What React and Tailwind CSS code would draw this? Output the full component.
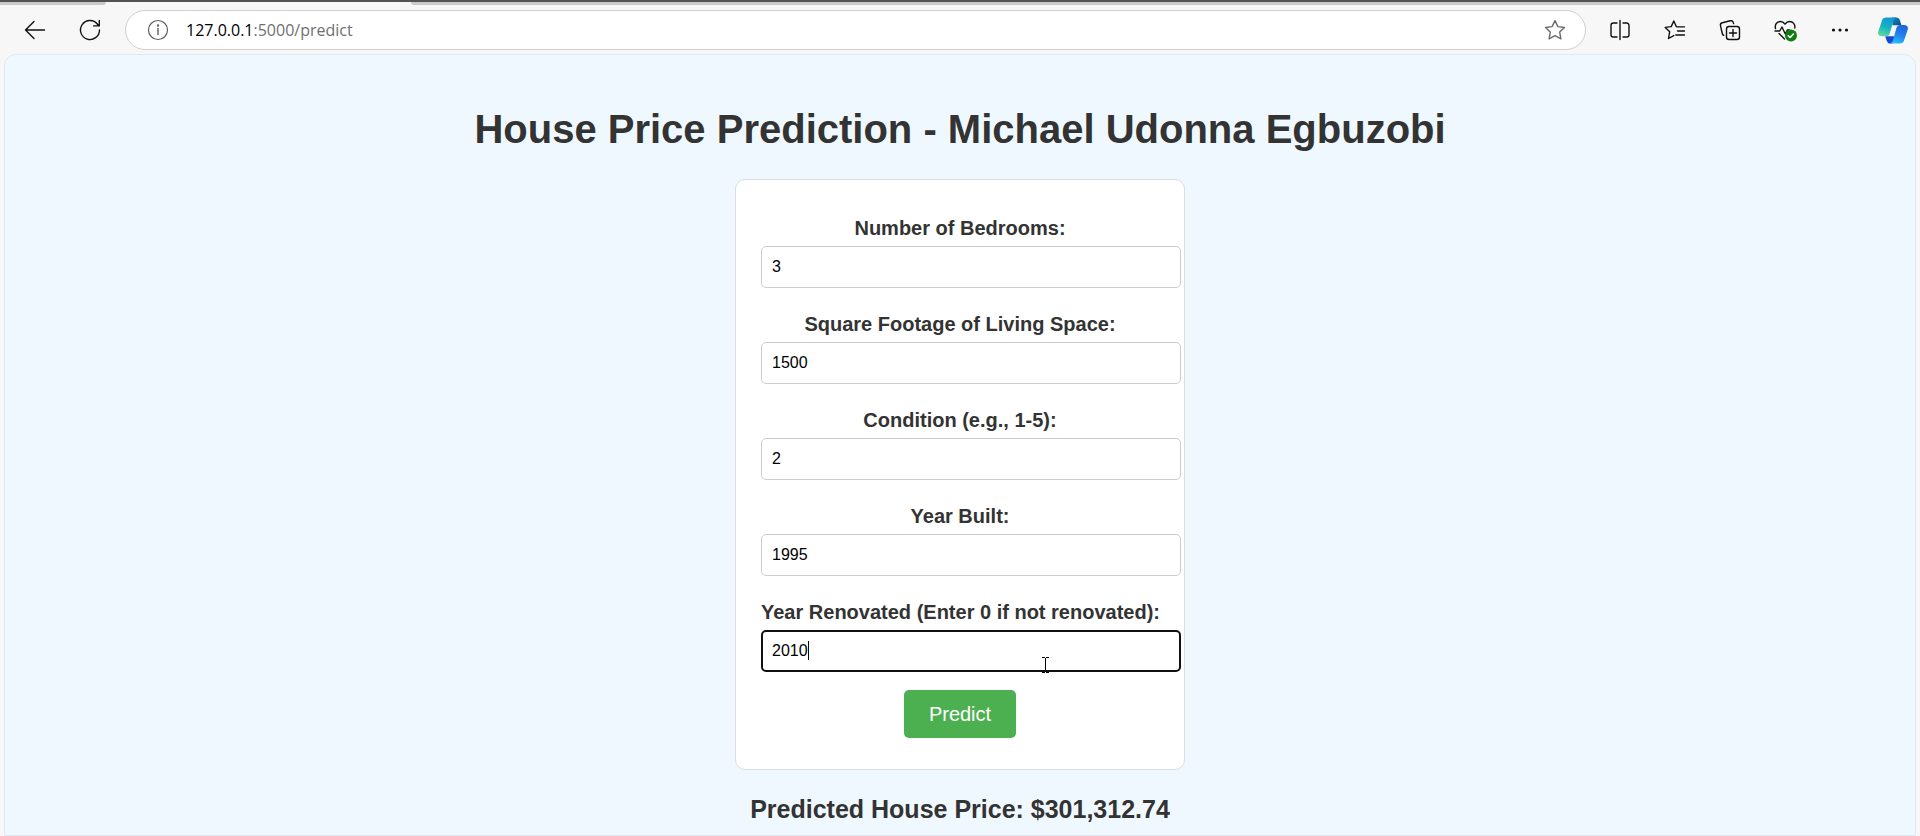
import { useState } from "react";

function Icon({ children, size = 24, className = "" }) {
  return (
    <svg width={size} height={size} viewBox="0 0 24 24" fill="none" stroke="currentColor" strokeWidth="1.4" strokeLinecap="round" strokeLinejoin="round" className={"shrink-0 " + className} aria-hidden="true">
      {children}
    </svg>
  );
}

function ToolButton({ label, children }) {
  return (
    <button type="button" aria-label={label} className="flex h-9 w-9 items-center justify-center text-[#111]">
      {children}
    </button>
  );
}

function CopilotLogo() {
  return (
    <svg width="30" height="27" viewBox="0 0 92 80" className="shrink-0" aria-hidden="true">
      <defs>
        <linearGradient id="cp-left" x1="0.6" y1="0" x2="0.3" y2="1">
          <stop offset="0" stopColor="#1496d8" />
          <stop offset="0.5" stopColor="#12b3c4" />
          <stop offset="1" stopColor="#62d99a" />
        </linearGradient>
        <linearGradient id="cp-right" x1="0.7" y1="0" x2="0.3" y2="1">
          <stop offset="0" stopColor="#1f62dd" />
          <stop offset="0.5" stopColor="#2280ee" />
          <stop offset="1" stopColor="#27c0f5" />
        </linearGradient>
        <linearGradient id="cp-top" x1="0" y1="0" x2="1" y2="1">
          <stop offset="0" stopColor="#1586b8" />
          <stop offset="1" stopColor="#0b4f86" />
        </linearGradient>
      </defs>
      <path d="M44 0h12c6 0 9 3 11 8l5 16H44z" fill="url(#cp-top)" />
      <path d="M22 58H54L44 80H38c-6 0-9-3-11-8z" fill="#1b45d3" />
      <path d="M25 0h32c-6 2-9 7-11 14L36 49c-2 6-6 9-12 9H12C3 58-2 52 1 43L12 10C14 3 18 0 25 0z" fill="url(#cp-left)" />
      <path d="M67 80H36c6-1 9-6 11-13l9-33c2-7 6-11 12-11h12c9 0 14 6 11 15L80 70c-2 7-6 10-13 10z" fill="url(#cp-right)" />
    </svg>
  );
}

function TabStrip() {
  return (
    <div className="flex h-[5px] border-t-2 border-[#545252] bg-[#f7f7f7]">
      <div className="w-[106px] rounded-br-lg bg-[#c9c9c9]" />
      <div className="w-[305px]" />
      <div className="flex-1 rounded-bl-lg bg-[#c9c9c9]" />
    </div>
  );
}

function Toolbar() {
  return (
    <div className="flex items-center pt-[5px] pb-1 pl-[17px] pr-[9px]">
      <div className="mr-[17px] flex gap-[19px]">
        <ToolButton label="Back">
          <Icon>
            <path d="M21.500 12H2.500M11 3.500 2.500 12l8.500 8.500" />
          </Icon>
        </ToolButton>
        <ToolButton label="Refresh">
          <Icon>
            <path d="M21.500 12A9.500 9.500 0 1 1 19.500 6.200L21 7.800M21.300 2.500V7.900H15.600" />
          </Icon>
        </ToolButton>
      </div>
      <div className="flex h-10 flex-1 items-center rounded-full border border-[#cfcfcf] bg-white pl-5 pr-[18px]">
        <Icon className="text-[#5f5f5f]">
          <circle cx="12" cy="12" r="9.500" strokeWidth="1.200" />
          <path d="M12 10.500v6" />
          <circle cx="12" cy="7.500" r=".5" fill="currentColor" />
        </Icon>
        <p className="ml-4 flex-1 font-['Open_Sans',sans-serif] text-[16px] leading-6 text-[#707070]">
          <span className="text-black">127.0.0.1</span>:5000/predict
        </p>
        <button type="button" aria-label="Add to favorites" className="text-[#6a6a6a]">
          <Icon>
            <path d="M12 2.600l2.900 6 6.600.9-4.800 4.600 1.200 6.700-5.900-3.200-5.900 3.200 1.200-6.700L2.500 9.500l6.600-.9z" />
          </Icon>
        </button>
      </div>
      <div className="ml-4 flex items-center">
        <div className="flex items-center gap-[19px]">
          <ToolButton label="Split screen">
            <Icon>
              <path d="M12 2.500v19M9 5H5.300A2.300 2.300 0 0 0 3 7.300v9.400A2.300 2.300 0 0 0 5.300 19H9M15 5h3.700A2.300 2.300 0 0 1 21 7.300v9.400a2.300 2.300 0 0 1-2.300 2.300H15" />
            </Icon>
          </ToolButton>
          <ToolButton label="Favorites">
            <Icon>
              <path d="M13.500 8.500h-.2L10.800 3 8.200 8.600l-6 .8 4.500 4.300L5.500 20.500l5.300-2.900M14 8.900h7.500M14.500 13h7M12.800 17h8.700" />
            </Icon>
          </ToolButton>
          <ToolButton label="Collections">
            <Icon>
              <rect x="8.500" y="8.500" width="13" height="13" rx="2.500" />
              <path d="M15 11.500v7M11.500 15h7M5.800 17.300a2.500 2.500 0 0 1-1.500-1.800L2.500 7.800A2.500 2.500 0 0 1 4.300 4.800l8-2a2.500 2.500 0 0 1 3 1.800l.3 1" />
            </Icon>
          </ToolButton>
          <ToolButton label="Browser essentials">
            <Icon>
              <path d="M2.500 10.500C1.500 6.500 4 3.500 7.300 3.500c2 0 3.500 1 4.700 2.700 1.200-1.700 2.700-2.700 4.700-2.700 3.300 0 5.700 2.800 5.100 6.500M2 13h4.700l2.300-4 3.300 7 2-4h2M6 15.500l5.500 5.500" />
              <circle cx="18" cy="17.500" r="6" fill="#107c10" stroke="none" />
              <path d="M15.300 17.700l1.800 1.800 3.300-3.500" stroke="#fff" strokeWidth="1.600" />
            </Icon>
          </ToolButton>
          <ToolButton label="Settings and more">
            <Icon>
              <g fill="currentColor" stroke="none">
                <circle cx="5.500" cy="12" r="1.600" />
                <circle cx="12" cy="12" r="1.600" />
                <circle cx="18.500" cy="12" r="1.600" />
              </g>
            </Icon>
          </ToolButton>
        </div>
        <div className="ml-[17px]">
          <ToolButton label="Copilot">
            <CopilotLogo />
          </ToolButton>
        </div>
      </div>
    </div>
  );
}

const FIELDS = [
  { id: "bedrooms", label: "Number of Bedrooms:", value: "3" },
  { id: "sqft", label: "Square Footage of Living Space:", value: "1500" },
  { id: "condition", label: "Condition (e.g., 1-5):", value: "2" },
  { id: "built", label: "Year Built:", value: "1995" },
  { id: "renovated", label: "Year Renovated (Enter 0 if not renovated):", value: "2010", active: true },
];

function Field({ id, label, value, active }) {
  const [text, setText] = useState(value);
  return (
    <div className="mb-6 last-of-type:mb-[18px]">
      <label htmlFor={id} className="mb-[5px] block whitespace-nowrap text-center text-[20px] font-bold leading-[25px]">
        {label}
      </label>
      <div className="relative -mr-[22px]">
        <input
          id={id}
          value={text}
          onChange={(e) => setText(e.target.value)}
          className={
            "block h-[42px] w-full rounded-[5px] bg-white text-[16px] text-black outline-none " +
            (active ? "border-2 border-[#101010] px-[9px]" : "border border-[#ccc] px-2.5")
          }
        />
        {active && (
          <>
            <span className="absolute left-[47px] top-[11px] h-[19px] w-px bg-black" />
            <svg width="9" height="16" viewBox="0 0 9 16" className="absolute left-[280px] top-[27px]" fill="none" stroke="#000" aria-hidden="true">
              <path d="M1 .5h3M5 .5h3M4.500 1v14M1 15.500h3M5 15.500h3" />
            </svg>
          </>
        )}
      </div>
    </div>
  );
}

export default function App() {
  return (
    <div className="flex min-h-screen flex-col bg-[#f7f7f7]">
      <TabStrip />
      <Toolbar />
      <main className="mx-1 flex flex-1 flex-col items-center rounded-t-xl border border-[#e2e8f0] bg-[#f0f8ff] font-['Liberation_Sans',Arial,sans-serif] text-[#333]">
        <h1 className="mt-[50px] text-center text-[40px] font-bold leading-[48px]">House Price Prediction - Michael Udonna Egbuzobi</h1>
        <form onSubmit={(e) => e.preventDefault()} className="mt-[26px] w-[450px] rounded-[10px] border border-[#ddd] bg-white px-[25px] pb-[31px] pt-9">
          {FIELDS.map((f) => (
            <Field key={f.id} {...f} />
          ))}
          <button type="submit" className="mx-auto block h-12 w-28 rounded-[5px] bg-[#4caf50] text-[20px] text-white">
            Predict
          </button>
        </form>
        <h2 className="mt-6 text-center text-[25px] font-bold leading-[30px]">Predicted House Price: $301,312.74</h2>
      </main>
    </div>
  );
}
